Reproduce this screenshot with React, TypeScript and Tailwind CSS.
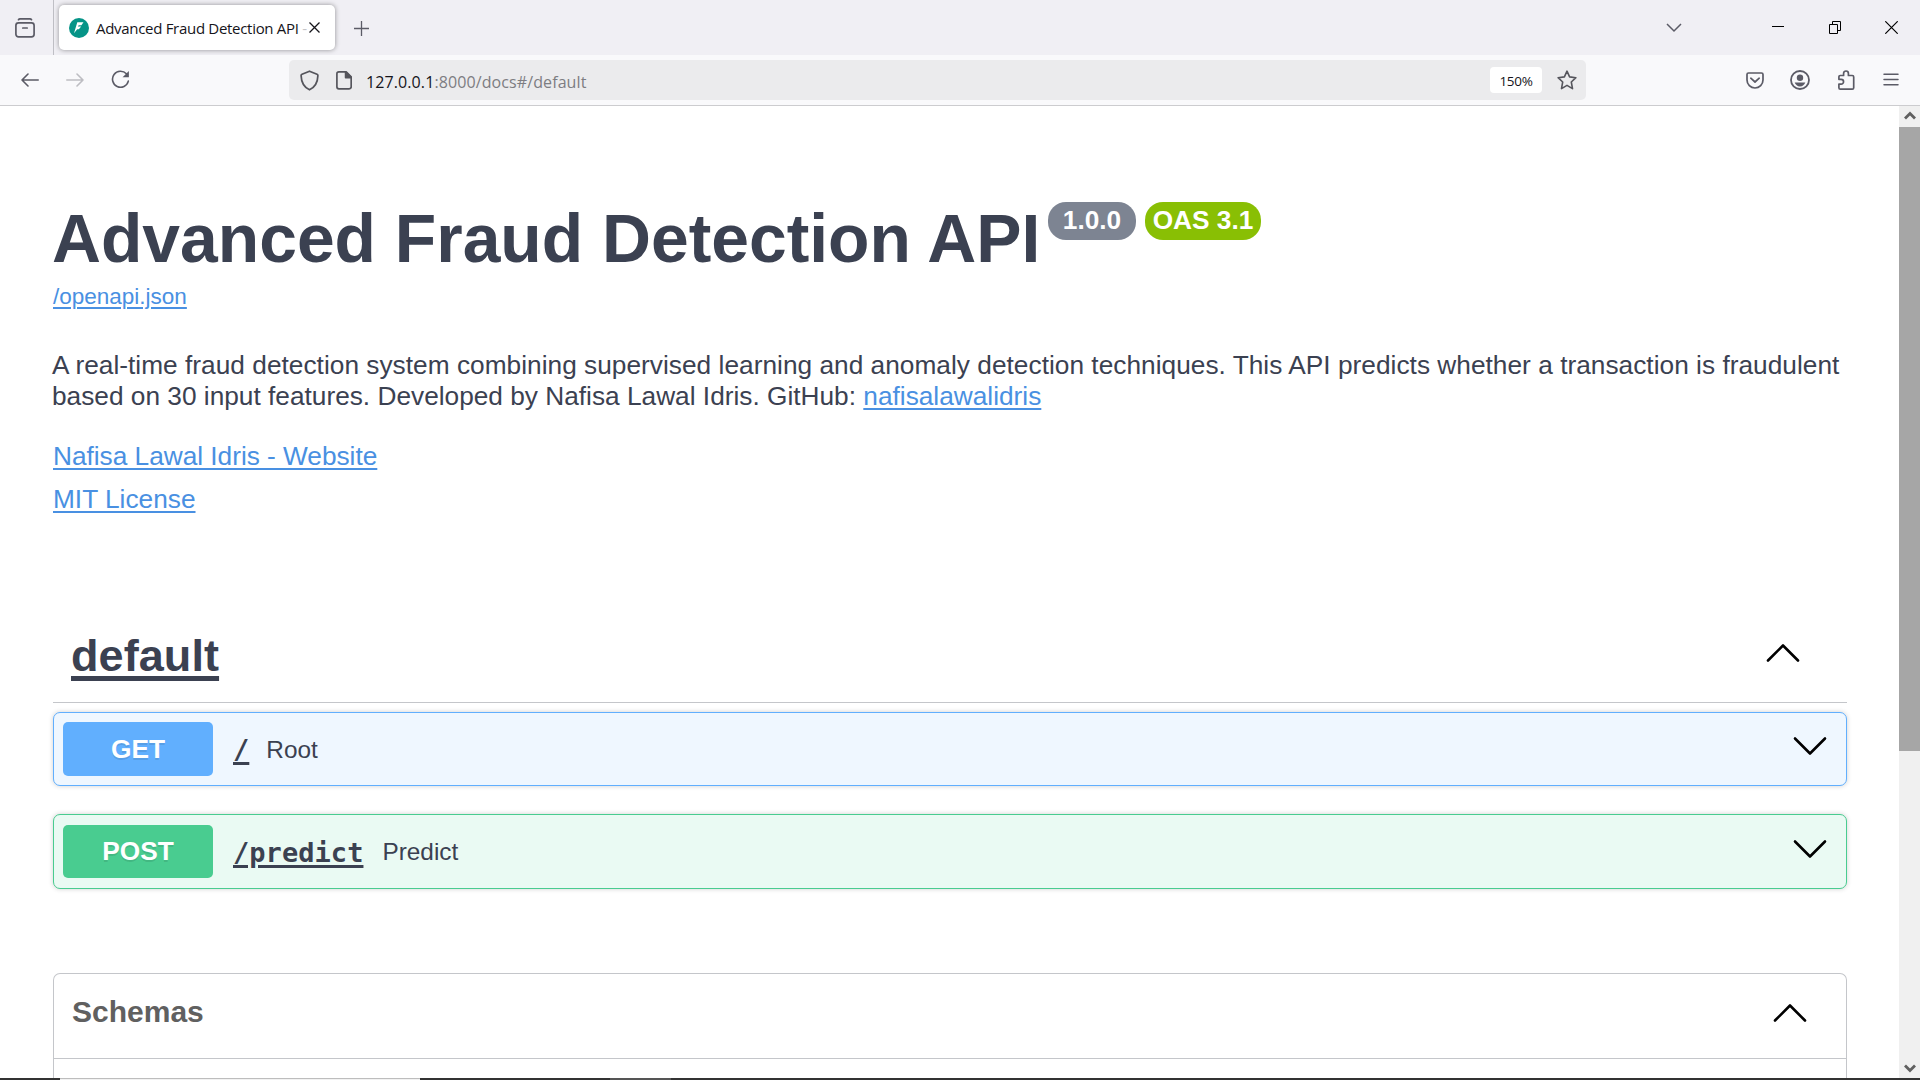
import React from "react";

type Dir = "up" | "down";

function Chevron({ dir, className = "" }: { dir: Dir; className?: string }) {
  return (
    <svg width="34" height="20" viewBox="0 0 34 20" fill="none" stroke="#000" strokeWidth="2.6" strokeLinecap="round" strokeLinejoin="round" className={className}>
      <path d={dir === "up" ? "M2 17.5 17 2.5l15 15" : "M2 2.5l15 15 15-15"} />
    </svg>
  );
}

function TabStrip() {
  return (
    <div className="flex h-[55px] shrink-0 items-start bg-[#f0eff4]">
      <div className="flex h-[55px] w-[54px] items-center border-r border-[#bfbfc5] pl-[15px]">
        <svg width="20" height="20" viewBox="0 0 20 20" fill="none" stroke="#5b5b66" strokeWidth="1.7" strokeLinecap="round">
          <path d="M3.5 1.7Q4 .9 5 .9h10q1 0 1.5.8" />
          <rect x=".9" y="4.9" width="18.2" height="14" rx="2.6" />
          <path d="M7.8 10h4.4" />
        </svg>
      </div>
      <div className="ml-[5px] mt-[5px] flex h-[45px] w-[276px] items-center rounded-[5px] bg-white pl-[10px] shadow-[0_0_5px_rgba(0,0,0,0.4)]">
        <svg width="20" height="20" viewBox="0 0 20 20">
          <circle cx="10" cy="10" r="10" fill="#059487" />
          <path d="M8.3 4.3h6.2l-2.100 2.900h-2.700l-.8 1.300h3.300L9.800 11.300H8.200L5 15.300z" fill="#fff" />
        </svg>
        <div className="ml-[7px] w-[213px] whitespace-nowrap text-[15px] leading-[22px] tracking-[-0.3px] text-[#15141a] [font-family:'Open_Sans',sans-serif]">
          Advanced Fraud Detection API <span className="text-[#c4c4c8]">-</span>
        </div>
        <svg width="11" height="11" viewBox="0 0 11 11" stroke="#15141a" strokeWidth="1.3">
          <path d="M.5.5l10 10M10.5.5l-10 10" />
        </svg>
      </div>
      <svg width="15" height="15" viewBox="0 0 15 15" stroke="#5b5b66" strokeWidth="1.3" className="ml-[19px] mt-[21px]">
        <path d="M7.5 0v15M0 7.5h15" />
      </svg>
      <div className="flex-1" />
      <svg width="16" height="10" viewBox="0 0 16 10" fill="none" stroke="#5b5b66" strokeWidth="1.5" className="mr-[90px] mt-[23px]">
        <path d="M1 1l7 7 7-7" />
      </svg>
      <div className="mr-[45px] mt-[26px] h-px w-[12px] bg-black" />
      <svg width="12" height="13" viewBox="0 0 12 13" fill="none" stroke="#000" className="mr-[44px] mt-[21px]">
        <path d="M.5 3.5h8v9h-8zM3.5 3.5v-3h8v9h-3" />
      </svg>
      <svg width="13" height="13" viewBox="0 0 13 13" stroke="#000" strokeWidth="1.2" className="mr-[22px] mt-[21px]">
        <path d="M.3.3l12.4 12.4M12.7.3L.3 12.7" />
      </svg>
    </div>
  );
}

function Toolbar() {
  return (
    <div className="flex h-[51px] shrink-0 items-center border-b border-[#cccccf] bg-[#f9f9fb] text-[#5b5b66]">
      <svg width="18" height="14" viewBox="0 0 18 14" fill="none" stroke="currentColor" strokeWidth="1.6" strokeLinecap="round" strokeLinejoin="round" className="ml-[21px]">
        <path d="M17.2 7H1M7 1L1 7l6 6" />
      </svg>
      <svg width="18" height="14" viewBox="0 0 18 14" fill="none" stroke="#bdbdc2" strokeWidth="1.6" strokeLinecap="round" strokeLinejoin="round" className="ml-[27px]">
        <path d="M.8 7H17M11 1l6 6-6 6" />
      </svg>
      <svg width="19" height="19" viewBox="0 0 19 19" fill="none" stroke="currentColor" strokeWidth="1.6" strokeLinecap="round" className="mb-px ml-[27px]">
        <path d="M17.3 11.1A8 8 0 1 1 15.4 3.8" />
        <path d="M17.9 1v6.3h-6.3z" fill="currentColor" stroke="none" />
      </svg>
      <div className="ml-[159px] flex h-[40px] w-[1297px] items-center rounded-[5px] bg-[#ebebed]">
        <svg width="19" height="21" viewBox="0 0 19 21" fill="none" stroke="#55555c" strokeWidth="1.7" strokeLinejoin="round" className="ml-[11px]">
          <path d="M9.5 1.2 17 4.3q.9.4.9 1.3c-.2 6.5-2.7 11.500-8.4 14.2C3.800 17.100 1.300 12.100 1.100 5.600q0-.9.9-1.300z" />
        </svg>
        <svg width="16" height="19" viewBox="0 0 16 19" fill="none" stroke="#55555c" strokeWidth="1.7" strokeLinejoin="round" className="ml-[17px]">
          <path d="M3 .9h7.2l5 5v9.900a2 2 0 0 1-2 2H2.900a2 2 0 0 1-2-2V2.900a2 2 0 0 1 2-2z" />
          <path d="M9.600 1v5.600h5.600z" fill="#55555c" />
        </svg>
        <div className="ml-[14px] pt-[3px] text-[16px] leading-[24px] tracking-[0.1px] text-[#7d7d82] [font-family:'Open_Sans',sans-serif]">
          <span className="text-[#15141a]">127.0.0.1</span>:8000/docs#/default
        </div>
        <div className="flex-1" />
        <div className="mr-[15px] h-[26px] w-[52px] rounded-[4px] bg-white pt-px text-center text-[13.5px] leading-[26px] tracking-[-0.3px] text-[#15141a] [font-family:'Open_Sans',sans-serif]">150%</div>
        <svg width="20" height="20" viewBox="0 0 20 20" fill="none" stroke="#55555c" strokeWidth="1.6" strokeLinejoin="round" className="mr-[9px]">
          <path d="M10 1.2l2.6 5.7 6.300.8-4.600 4.300 1.200 6.600L10 15.400l-5.500 3.200L5.700 12 1.100 7.700l6.300-.8z" />
        </svg>
      </div>
      <div className="flex-1" />
      <svg width="18" height="17" viewBox="0 0 18 17" fill="none" stroke="currentColor" strokeWidth="1.7" strokeLinecap="round" strokeLinejoin="round" className="mr-[26px]">
        <path d="M2.5 1h13q1.500 0 1.500 1.500V8a8 8 0 0 1-16 0V2.500Q1 1 2.500 1z" />
        <path d="M4.800 6.200L9 10l4.200-3.800" />
      </svg>
      <svg width="20" height="20" viewBox="0 0 20 20" className="mr-[27px]">
        <circle cx="10" cy="10" r="9" fill="none" stroke="currentColor" strokeWidth="1.8" />
        <circle cx="10" cy="7.7" r="3.2" fill="currentColor" />
        <path d="M4.700 12.600h10.600c-.7 2.400-2.800 3.900-5.300 3.900s-4.600-1.500-5.300-3.900z" fill="currentColor" />
      </svg>
      <svg width="18" height="20" viewBox="0 0 18 20" fill="none" stroke="currentColor" strokeWidth="1.7" strokeLinejoin="round" className="mr-[28px]">
        <path d="M1.900 9.300V6.800Q1.900 5.500 3.200 5.500h3.400V3.400a2.400 2.400 0 0 1 4.800 0v2.100h3.900q1.400 0 1.400 1.400v10.800q0 1.400-1.400 1.400H3.300q-1.400 0-1.400-1.400v-3.500h2.200a2.400 2.400 0 0 0 0-4.900z" />
      </svg>
      <svg width="16" height="13" viewBox="0 0 16 13" stroke="currentColor" strokeWidth="1.5" strokeLinecap="round" className="mb-px mr-[21px]">
        <path d="M1 1.200h14M1 6.500h14M1 11.800h14" />
      </svg>
    </div>
  );
}

interface Operation {
  method: string;
  path: string;
  summary: string;
  box: string;
  button: string;
  label: string;
}

const operations: Operation[] = [
  { method: "GET", path: "/", summary: "Root", box: "h-[74px] border-[#61affe] bg-[#eff7ff]", button: "h-[54px] bg-[#61affe]", label: "ml-[17px]" },
  { method: "POST", path: "/predict", summary: "Predict", box: "mt-[28px] h-[75px] border-[#49cc90] bg-[#eafaf3]", button: "h-[53px] bg-[#49cc90]", label: "ml-[19px]" },
];

function OperationRow({ op }: { op: Operation }) {
  return (
    <div className={`flex items-center rounded-[7px] border pl-[9px] pr-[19px] shadow-[0_0_5px_rgba(0,0,0,0.19)] ${op.box}`}>
      <div className={`flex w-[150px] items-center justify-center rounded-[5px] pb-px text-[26.25px] font-bold leading-[30px] text-white [text-shadow:0_2px_0_rgba(0,0,0,0.1)] ${op.button}`}>
        {op.method}
      </div>
      <div className="ml-[20px] pt-[2px] text-[27px] font-bold leading-[36px] tracking-[0.05px] underline decoration-[3px] underline-offset-[3px] [font-family:'DejaVu_Sans_Mono',monospace]">
        {op.path}
      </div>
      <div className={`pt-px text-[24.375px] leading-[28px] ${op.label}`}>{op.summary}</div>
      <Chevron dir="down" className="mb-[6px] ml-auto" />
    </div>
  );
}

function Scrollbar() {
  return (
    <div className="flex w-[21px] shrink-0 flex-col bg-[#f0f0f0]">
      <div className="flex h-[21px] items-start justify-center pt-[5px]">
        <svg width="12" height="9" viewBox="0 0 12 9" fill="none" stroke="#606060" strokeWidth="2.8"><path d="M1 7.500l5-5 5 5" /></svg>
      </div>
      <div className="h-[624px] bg-[#a6a6a6]" />
      <div className="flex flex-1 items-end justify-center pb-[5px]">
        <svg width="12" height="9" viewBox="0 0 12 9" fill="none" stroke="#606060" strokeWidth="2.8"><path d="M1 1.500l5 5 5-5" /></svg>
      </div>
    </div>
  );
}

const link = "text-[#4990e2] underline decoration-[2px] underline-offset-[3px]";

export default function App() {
  return (
    <div className="flex h-[1080px] w-[1920px] flex-col overflow-hidden bg-white text-[#3b4151] [font-family:'Liberation_Sans',Arial,sans-serif]">
      <TabStrip />
      <Toolbar />
      <div className="flex h-[972px] shrink-0">
        <main className="flex-1 overflow-hidden pl-[53px] pr-[52px] pt-[94px]">
          <div className="-ml-px flex h-[78px] items-start whitespace-nowrap">
            <h1 className="w-[987px] text-[67.8px] font-bold leading-[78px]">Advanced Fraud Detection API</h1>
            <span className="ml-[9px] mt-[2px] flex h-[38px] w-[88px] items-center justify-center rounded-[18px] bg-[#7d8492] text-[26.25px] font-bold text-white">1.0.0</span>
            <span className="ml-[9px] mt-[2px] flex h-[38px] w-[116px] items-center justify-center rounded-[18px] bg-[#89bf04] text-[26.25px] font-bold text-white">OAS 3.1</span>
          </div>
          <div className="mt-[6px] text-[22.5px] leading-[26px]"><a className={link}>/openapi.json</a></div>
          <p className="-ml-px mt-[40px] whitespace-nowrap text-[26.25px] leading-[31px]">
            <span className="tracking-[0.022px]">
              A real-time fraud detection system combining supervised learning and anomaly detection techniques. This API predicts whether a transaction is fraudulent
            </span>
            <br />
            based on 30 input features. Developed by Nafisa Lawal Idris. GitHub: <a className={link}>nafisalawalidris</a>
          </p>
          <div className="mt-[29px] text-[26.25px] leading-[31px] tracking-[-0.02px]"><a className={link}>Nafisa Lawal Idris - Website</a></div>
          <div className="mt-[12px] text-[26.25px] leading-[31px]"><a className={link}>MIT License</a></div>

          <div className="mt-[115px] flex h-[73px] items-start justify-between border-b border-[#c4c6ca] pl-[18px] pr-[47px]">
            <h2 className="text-[45px] font-bold leading-[52px] tracking-[0.08px] underline decoration-[5px] underline-offset-[5px]">default</h2>
            <Chevron dir="up" className="mt-[13px]" />
          </div>
          <div className="mt-[9px]">
            {operations.map((op) => (
              <OperationRow key={op.path} op={op} />
            ))}
          </div>

          <section className="mt-[84px] h-[120px] rounded-t-[7px] border border-b-0 border-[#c4c6ca]">
            <div className="flex h-[85px] items-start justify-between border-b border-[#c4c6ca] pl-[18px] pr-[39px]">
              <h3 className="mt-[20px] text-[30px] font-bold leading-[35px] text-[#606060]">Schemas</h3>
              <Chevron dir="up" className="mt-[29px]" />
            </div>
          </section>
        </main>
        <Scrollbar />
      </div>
      <div className="flex h-[2px] shrink-0 bg-[#333333]">
        <div className="ml-[60px] h-[2px] w-[360px] border-t border-[#bdbdbd] bg-[#f2f2f2]" />
        <div className="ml-[190px] h-[2px] w-[61px] bg-[#555555]" />
      </div>
    </div>
  );
}
